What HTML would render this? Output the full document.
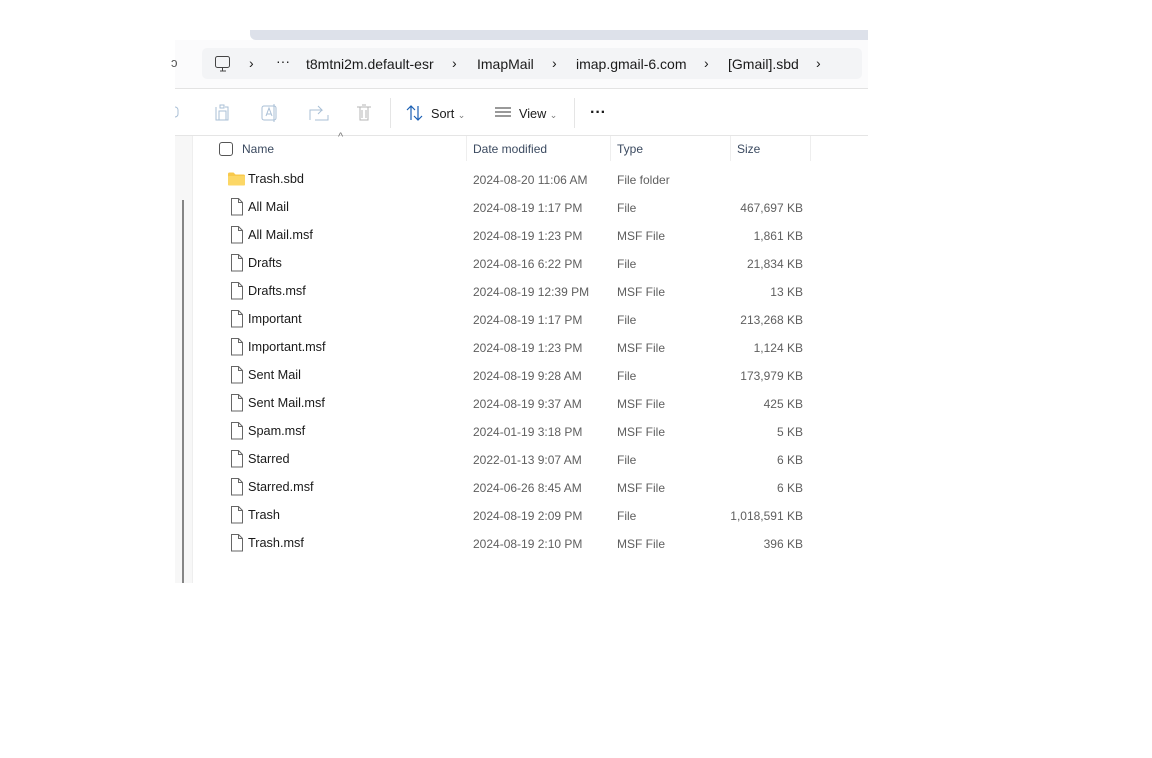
<!DOCTYPE html>
<html><head><style>
body{margin:0;width:1152px;height:758px;background:#fff;font-family:"Liberation Sans",sans-serif;position:relative;overflow:hidden}
.a{position:absolute}
.t{font-size:12.7px;color:#1a1a1a;white-space:nowrap}
.g{font-size:12px;color:#5f5f5f;white-space:nowrap}
</style></head><body>
<div class="a" style="left:175px;top:30px;width:693px;height:553px;background:#fff"></div>
<div class="a" style="left:250px;top:30px;width:618px;height:10px;background:#dde1ea;border-bottom-left-radius:6px"></div>
<div class="a" style="left:175px;top:40px;width:693px;height:48px;background:#fbfbfc"></div>
<div class="a" style="left:202px;top:48px;width:660px;height:31px;background:#f3f4f6;border-radius:5px"></div>
<div class="a t" style="left:171px;top:55px;font-size:13px;color:#555">ɔ</div>
<div class="a" style="left:175px;top:88px;width:693px;height:1px;background:#e3e3e3"></div>
<div class="a" style="left:175px;top:135px;width:693px;height:1px;background:#e5e5e5"></div>
<div class="a" style="left:175px;top:136px;width:17px;height:447px;background:#f7f7f7;border-right:1px solid #eee"></div>
<div class="a" style="left:182px;top:200px;width:2px;height:383px;background:#858585"></div>
<svg class="a" style="left:214px;top:55px" width="18" height="18"><rect x="1.5" y="1.5" width="14" height="11" rx="2" fill="none" stroke="#444"/><path d="M6 16h6M8.5 13v3" stroke="#444"/></svg>
<div class="a t" style="left:249px;top:55px;font-size:14px">›</div>
<div class="a t" style="left:276px;top:53px;font-size:14px">···</div>
<div class="a t" style="left:306px;top:56px;font-size:14px">t8mtni2m.default-esr</div>
<div class="a t" style="left:452px;top:55px;font-size:14px">›</div>
<div class="a t" style="left:477px;top:56px;font-size:14px">ImapMail</div>
<div class="a t" style="left:552px;top:55px;font-size:14px">›</div>
<div class="a t" style="left:576px;top:56px;font-size:14px">imap.gmail-6.com</div>
<div class="a t" style="left:704px;top:55px;font-size:14px">›</div>
<div class="a t" style="left:728px;top:56px;font-size:14px">[Gmail].sbd</div>
<div class="a t" style="left:816px;top:55px;font-size:14px">›</div>
<svg class="a" style="left:170px;top:102px" width="215" height="22" fill="none" stroke="#a9bfd6"><path d="M5 5a3 3 0 0 1 3 3v4a3 3 0 0 1-3 3"/><path d="M46 5v13h12V5h-3M50 3h4v3h-4z M49 9h7v9h-7z"/><rect x="92" y="4" width="14" height="14" rx="2"/><path d="M96 14l3-8 3 8M97 12h4M104 2v18" /><path d="M140 18V8h12l-4-4M152 8l-4 4M145 18h13v-5"/><path d="M187 5h14M190 5v13h8V5M192 3h4M192 8v8M196 8v8" stroke="#b5b5b5"/></svg>
<div class="a" style="left:390px;top:98px;width:1px;height:30px;background:#e5e5e5"></div>
<svg class="a" style="left:406px;top:105px" width="18" height="16" fill="none" stroke="#333" stroke-width="1.2"><path d="M5 15V1M1 5l4-4 4 4M12 1v14M8 11l4 4 4-4" stroke="#1a5fb4"/></svg>
<div class="a t" style="left:431px;top:107px">Sort <span style="font-size:9px;color:#777">⌄</span></div>
<svg class="a" style="left:495px;top:107px" width="16" height="10" stroke="#333"><path d="M0 1h16M0 5h16M0 9h16"/></svg>
<div class="a t" style="left:519px;top:107px">View <span style="font-size:9px;color:#777">⌄</span></div>
<div class="a" style="left:574px;top:98px;width:1px;height:30px;background:#e5e5e5"></div>
<div class="a t" style="left:590px;top:104px;font-size:16px;font-weight:bold">···</div>
<div class="a" style="left:219px;top:142px;width:12px;height:12px;border:1px solid #555;border-radius:3px"></div>
<div class="a t" style="left:338px;top:131px;font-size:11px;color:#777">^</div>
<div class="a g" style="left:242px;top:142px;color:#3b4a60">Name</div>
<div class="a" style="left:466px;top:136px;width:1px;height:25px;background:#eee"></div>
<div class="a g" style="left:473px;top:142px;color:#3b4a60">Date modified</div>
<div class="a" style="left:610px;top:136px;width:1px;height:25px;background:#eee"></div>
<div class="a g" style="left:617px;top:142px;color:#3b4a60">Type</div>
<div class="a" style="left:730px;top:136px;width:1px;height:25px;background:#eee"></div>
<div class="a g" style="left:737px;top:142px;color:#3b4a60">Size</div>
<div class="a" style="left:810px;top:136px;width:1px;height:25px;background:#eee"></div>
<div id="rows"></div>
<script>
var d=[["Trash.sbd","2024-08-20 11:06 AM","File folder",""],["All Mail","2024-08-19 1:17 PM","File","467,697 KB"],["All Mail.msf","2024-08-19 1:23 PM","MSF File","1,861 KB"],["Drafts","2024-08-16 6:22 PM","File","21,834 KB"],["Drafts.msf","2024-08-19 12:39 PM","MSF File","13 KB"],["Important","2024-08-19 1:17 PM","File","213,268 KB"],["Important.msf","2024-08-19 1:23 PM","MSF File","1,124 KB"],["Sent Mail","2024-08-19 9:28 AM","File","173,979 KB"],["Sent Mail.msf","2024-08-19 9:37 AM","MSF File","425 KB"],["Spam.msf","2024-01-19 3:18 PM","MSF File","5 KB"],["Starred","2022-01-13 9:07 AM","File","6 KB"],["Starred.msf","2024-06-26 8:45 AM","MSF File","6 KB"],["Trash","2024-08-19 2:09 PM","File","1,018,591 KB"],["Trash.msf","2024-08-19 2:10 PM","MSF File","396 KB"]];
var h="";d.forEach(function(r,i){var y=172+i*28;
h+=i==0?'<svg class="a" style="left:228px;top:'+(y+0)+'px" width="17" height="14"><path d="M0 2a1.5 1.5 0 0 1 1.5-1.5h4l2 2h8a1.5 1.5 0 0 1 1.5 1.5v8a1.5 1.5 0 0 1-1.5 1.5h-14A1.5 1.5 0 0 1 0 12z" fill="#f8c94c"/><rect x="0" y="4" width="17" height="9.5" rx="1" fill="#fcd766"/></svg>':'<svg class="a" style="left:230px;top:'+(y-2)+'px" width="14" height="18" fill="#fff" stroke="#666"><path d="M1.5 .5h7l4 4v12.5h-11z M8.5 .5v4h4"/></svg>';
h+='<div class="a t" style="left:248px;top:'+y+'px">'+r[0]+'</div><div class="a g" style="left:473px;top:'+(y+1)+'px">'+r[1]+'</div><div class="a g" style="left:617px;top:'+(y+1)+'px">'+r[2]+'</div><div class="a g" style="right:349px;top:'+(y+1)+'px">'+r[3]+'</div>';});
document.getElementById("rows").innerHTML=h;
</script>
</body></html>
